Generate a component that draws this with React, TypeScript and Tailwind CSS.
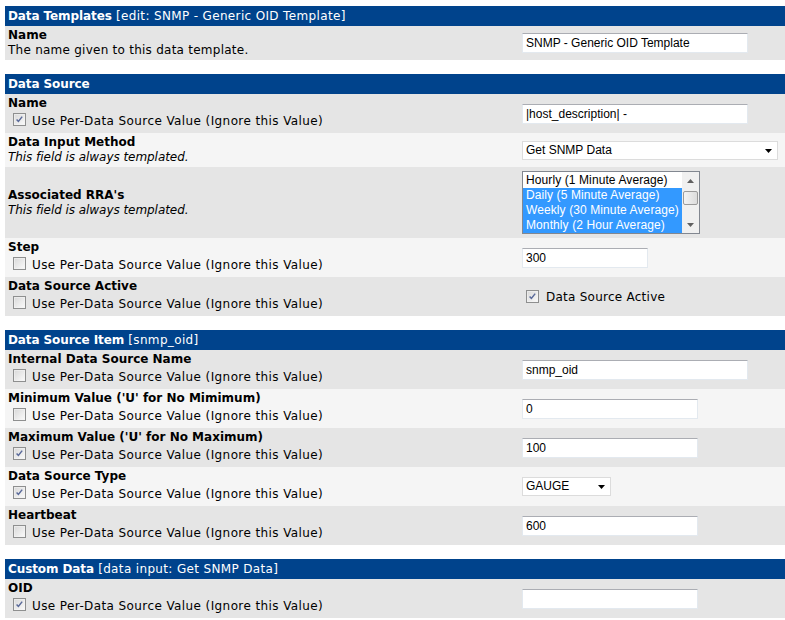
import React from "react";

const V = "font-['DejaVu_Sans',Verdana,sans-serif]";
const A = "font-['Liberation_Sans',Arial,sans-serif]";

function Check({ checked }: { checked: boolean }) {
  return (
    <span className="relative inline-block w-[13px] h-[13px] shrink-0 border border-[#8e8f8f] bg-linear-to-br from-[#d8d8d8] to-[#fbfbfb]">
      <span className="absolute inset-0 border border-[#f4f4f4]/60" />
      {checked && (
        <svg className="absolute left-0 top-0" width="11" height="11" viewBox="0 0 11 11">
          <path d="M2.6 5.4 L4.4 7.4 L8.2 2.6" stroke="#5a6a9a" strokeWidth="1.5" fill="none" />
        </svg>
      )}
    </span>
  );
}

function Header({ bold, rest }: { bold: string; rest?: string }) {
  return (
    <div className={`h-[20px] bg-[#00438c] text-white text-[12px] leading-[20px] pl-[3px] ${V}`}>
      <span className="font-bold tracking-[-0.1px]">{bold}</span>
      {rest && <span className="tracking-[0.35px]"> {rest}</span>}
    </div>
  );
}

function Row({
  dark,
  title,
  desc,
  italic,
  cb,
  children,
}: {
  dark: boolean;
  title: string;
  desc?: string;
  italic?: boolean;
  cb?: boolean;
  children?: React.ReactNode;
}) {
  return (
    <div className={`flex items-center ${dark ? "bg-[#e5e5e5]" : "bg-[#f5f5f5]"}`}>
      <div className={`w-[517px] shrink-0 pl-[3px] py-[2px] text-[12px] text-black ${V}`}>
        <div className="font-bold leading-[15px]">{title}</div>
        {desc && (
          <div className={`leading-[15px] ${italic ? "italic tracking-[-0.05px]" : "tracking-[0.25px]"}`}>{desc}</div>
        )}
        {cb !== undefined && (
          <div className="flex items-start h-[20px]">
            <span className="ml-[5px] mt-[2px] flex">
              <Check checked={cb} />
            </span>
            <span className="ml-[6px] leading-[20px] tracking-[0.4px]">
              Use Per-Data Source Value (Ignore this Value)
            </span>
          </div>
        )}
      </div>
      <div className="flex-1 flex items-center">{children}</div>
    </div>
  );
}

function Input({ w, value }: { w: string; value: string }) {
  return (
    <div
      className={`h-[20px] ${w} bg-white border border-[#e3e9ef] border-t-[#abadb3] text-[12px] leading-[18px] pl-[3px] text-black ${A}`}
    >
      {value}
    </div>
  );
}

function Select({ w, value }: { w: string; value: string }) {
  return (
    <div
      className={`relative h-[19px] ${w} bg-white border border-[#dcdcdc] text-[12px] leading-[17px] pl-[3px] text-black ${A}`}
    >
      {value}
      <svg className="absolute right-[5px] top-[7px]" width="7" height="4" viewBox="0 0 7 4">
        <path d="M0 0 L7 0 L3.5 4 Z" fill="#000" />
      </svg>
    </div>
  );
}

function ListBox() {
  const items = [
    { t: "Hourly (1 Minute Average)", s: false },
    { t: "Daily (5 Minute Average)", s: true },
    { t: "Weekly (30 Minute Average)", s: true },
    { t: "Monthly (2 Hour Average)", s: true },
  ];
  return (
    <div className="flex w-[178px] h-[63px] border border-[#828790] bg-white overflow-hidden">
      <div className={`flex-1 pt-[1px] text-[12px] leading-[15px] tracking-[0.1px] ${A}`}>
        {items.map((i) => (
          <div key={i.t} className={`pl-[3px] whitespace-nowrap ${i.s ? "bg-[#3399ff] text-white" : "text-black"}`}>
            {i.t}
          </div>
        ))}
      </div>
      <div className="w-[17px] flex flex-col bg-[#f0f0f0]">
        <div className="h-[17px] flex items-center justify-center">
          <svg width="7" height="4" viewBox="0 0 7 4">
            <path d="M0 4 L7 4 L3.5 0 Z" fill="#606060" />
          </svg>
        </div>
        <div className="mx-[1px] mt-[2px] h-[14px] rounded-[2px] border border-[#9a9a9a] bg-linear-to-r from-[#f3f3f3] to-[#dcdcdc]" />
        <div className="flex-1" />
        <div className="h-[17px] flex items-center justify-center">
          <svg width="7" height="4" viewBox="0 0 7 4">
            <path d="M0 0 L7 0 L3.5 4 Z" fill="#606060" />
          </svg>
        </div>
      </div>
    </div>
  );
}

export default function App() {
  return (
    <div className="min-h-[620px] bg-white pt-[6px] pl-[5px]">
      <Header bold="Data Templates" rest="[edit: SNMP - Generic OID Template]" />
      <Row dark title="Name" desc="The name given to this data template.">
        <Input w="w-[226px]" value="SNMP - Generic OID Template" />
      </Row>

      <div className="h-[14px]" />

      <Header bold="Data Source" />
      <Row dark title="Name" cb={true}>
        <Input w="w-[226px]" value="|host_description| -" />
      </Row>
      <Row dark={false} title="Data Input Method" desc="This field is always templated." italic>
        <Select w="w-[256px]" value="Get SNMP Data" />
      </Row>
      <Row dark title="Associated RRA's" desc="This field is always templated." italic>
        <div className="py-[4px]">
          <ListBox />
        </div>
      </Row>
      <Row dark={false} title="Step" cb={false}>
        <Input w="w-[126px]" value="300" />
      </Row>
      <Row dark title="Data Source Active" cb={false}>
        <div className={`flex items-center ml-[4px] text-[12px] tracking-[0.25px] text-black ${V}`}>
          <Check checked={true} />
          <span className="ml-[7px]">Data Source Active</span>
        </div>
      </Row>

      <div className="h-[14px]" />

      <Header bold="Data Source Item" rest="[snmp_oid]" />
      <Row dark title="Internal Data Source Name" cb={false}>
        <Input w="w-[226px]" value="snmp_oid" />
      </Row>
      <Row dark={false} title="Minimum Value ('U' for No Mimimum)" cb={false}>
        <Input w="w-[176px]" value="0" />
      </Row>
      <Row dark title="Maximum Value ('U' for No Maximum)" cb={true}>
        <Input w="w-[176px]" value="100" />
      </Row>
      <Row dark={false} title="Data Source Type" cb={true}>
        <Select w="w-[89px]" value="GAUGE" />
      </Row>
      <Row dark title="Heartbeat" cb={false}>
        <Input w="w-[176px]" value="600" />
      </Row>

      <div className="h-[14px]" />

      <Header bold="Custom Data" rest="[data input: Get SNMP Data]" />
      <Row dark title="OID" cb={true}>
        <Input w="w-[176px]" value="" />
      </Row>
    </div>
  );
}
